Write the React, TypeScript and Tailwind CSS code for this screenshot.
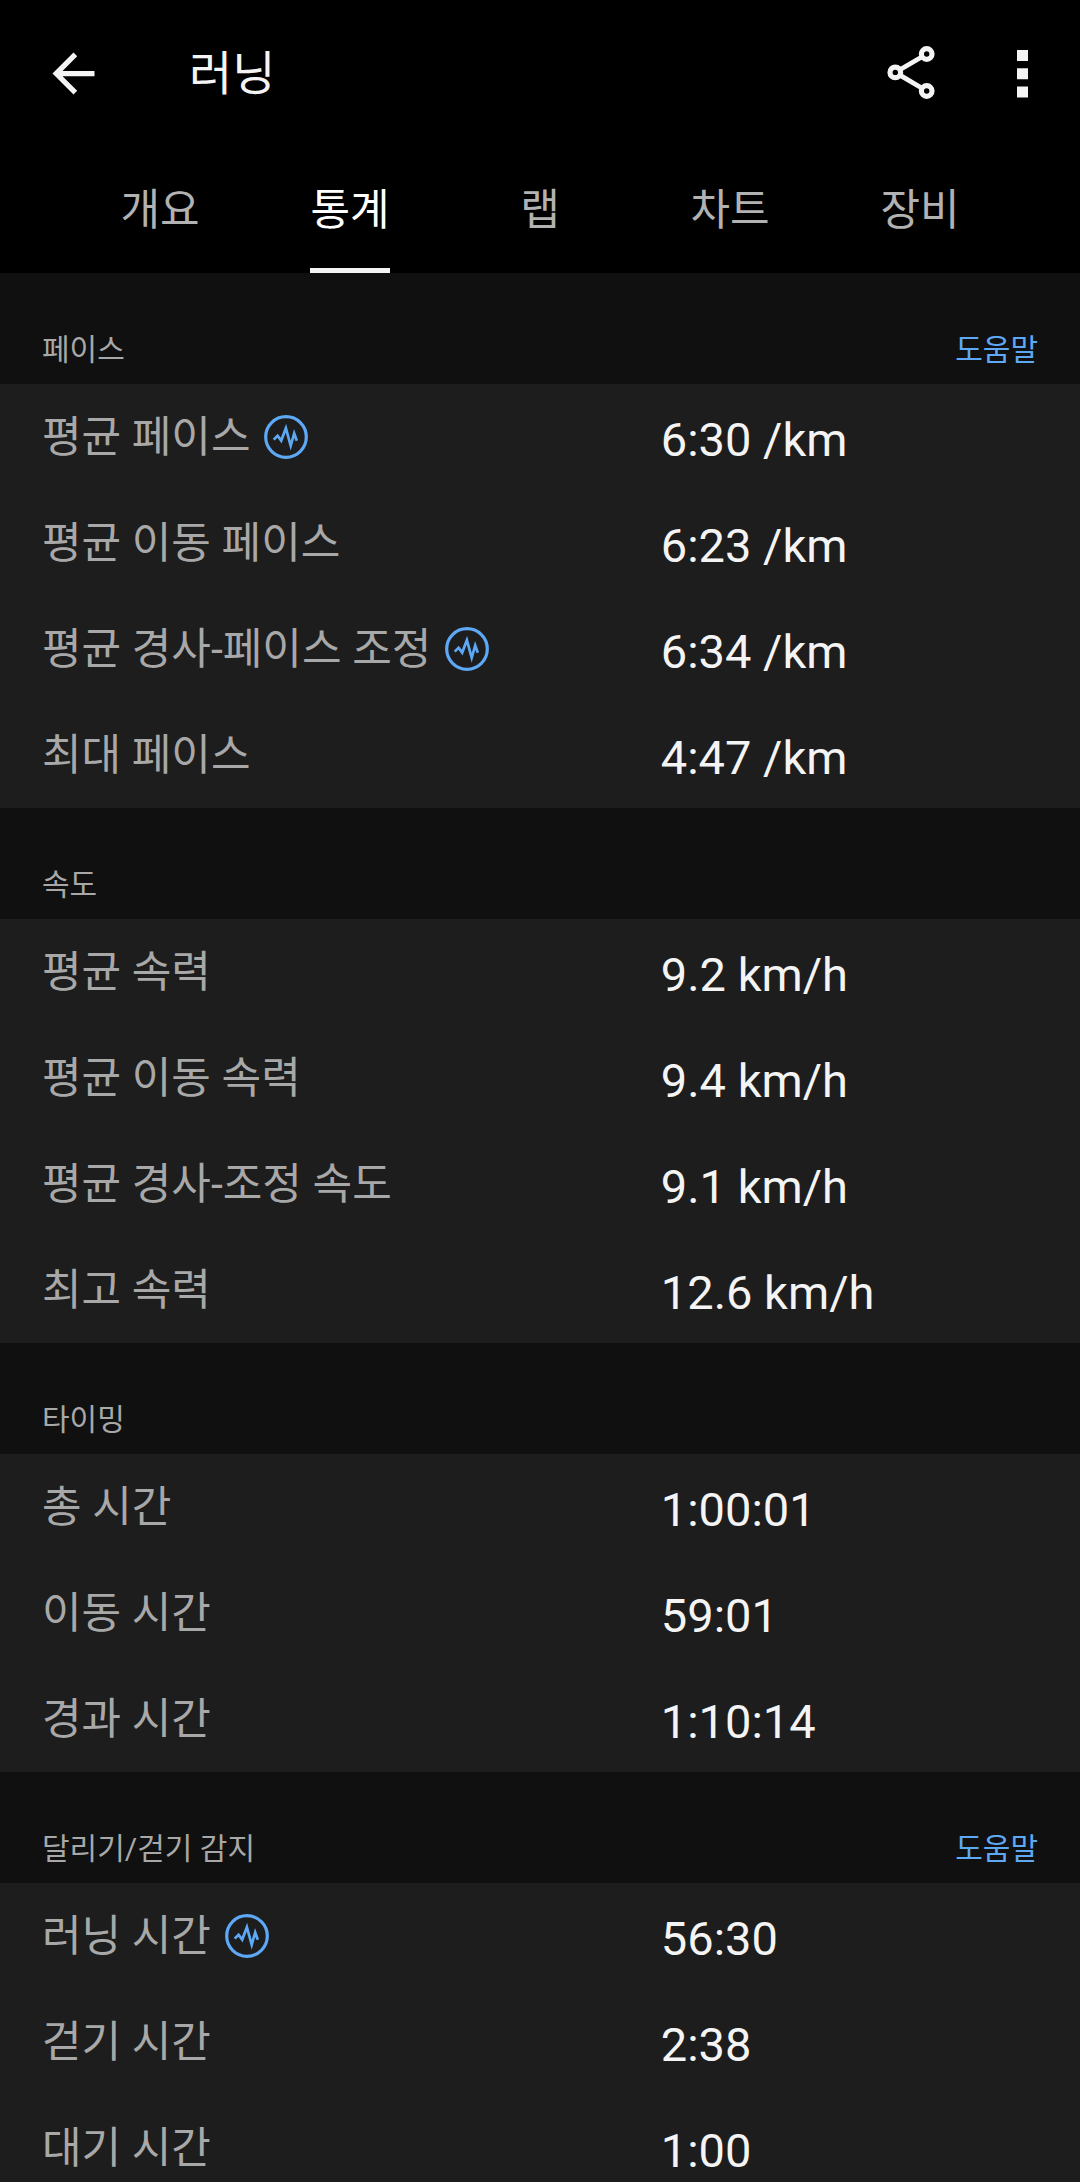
import React from 'react';

type Stat = {
    label: string;
    value: string;
    estimated?: boolean;
};

type StatSection = {
    title: string;
    help?: boolean;
    stats: Stat[];
};

const tabs = ['개요', '통계', '랩', '차트', '장비'];

const sections: StatSection[] = [
    {
        title: '페이스',
        help: true,
        stats: [
            { label: '평균 페이스', value: '6:30 /km', estimated: true },
            { label: '평균 이동 페이스', value: '6:23 /km' },
            { label: '평균 경사-페이스 조정', value: '6:34 /km', estimated: true },
            { label: '최대 페이스', value: '4:47 /km' },
        ],
    },
    {
        title: '속도',
        stats: [
            { label: '평균 속력', value: '9.2 km/h' },
            { label: '평균 이동 속력', value: '9.4 km/h' },
            { label: '평균 경사-조정 속도', value: '9.1 km/h' },
            { label: '최고 속력', value: '12.6 km/h' },
        ],
    },
    {
        title: '타이밍',
        stats: [
            { label: '총 시간', value: '1:00:01' },
            { label: '이동 시간', value: '59:01' },
            { label: '경과 시간', value: '1:10:14' },
        ],
    },
    {
        title: '달리기/걷기 감지',
        help: true,
        stats: [
            { label: '러닝 시간', value: '56:30', estimated: true },
            { label: '걷기 시간', value: '2:38' },
            { label: '대기 시간', value: '1:00' },
        ],
    },
];

const BackIcon: React.FC = () => (
    <svg width="63" height="63" viewBox="0 0 24 24" fill="currentColor" aria-hidden="true">
        <path d="M20 11H7.83l5.59-5.59L12 4l-8 8 8 8 1.41-1.41L7.83 13H20v-2z" />
    </svg>
);

const ShareIcon: React.FC = () => (
    <svg width="55" height="55" viewBox="0 0 55 55" fill="none" stroke="currentColor" strokeWidth="5.2" aria-hidden="true">
        <circle cx="11.3" cy="26.4" r="5.3" />
        <circle cx="42.7" cy="8" r="5.3" />
        <circle cx="42.7" cy="45" r="5.3" />
        <path d="M15.9 23.7l22.2-13M15.9 29.1l22.2 13.1" strokeWidth="4.8" />
    </svg>
);

const MoreIcon: React.FC = () => (
    <svg width="24" height="55" viewBox="0 0 24 55" fill="currentColor" aria-hidden="true">
        <path d="M6 4h11v11H6zM6 22.2h11v11H6zM6 40.5h11v11H6z" />
    </svg>
);

const PulseIcon: React.FC = () => (
    <svg width="44" height="44" viewBox="0 0 44 44" fill="none" stroke="currentColor" className="shrink-0 text-[#5ea9f5]" aria-hidden="true">
        <circle cx="22" cy="22" r="20.3" strokeWidth="3.2" />
        <path d="M9.7 24.6l3.9-3.9 3.6 4.9 4.7-12.4 4.8 17.6 3.5-12.3 2.6 7.2" strokeWidth="2.7" strokeMiterlimit="10" />
    </svg>
);

const Section: React.FC<{ section: StatSection }> = ({ section }) => (
    <section>
        <div className="flex justify-between px-[42px] pt-[54px] pb-3 text-[30px] leading-[45px]">
            <h2 className="text-[#a8a8a8]">{section.title}</h2>
            {section.help && (
                <a href="#help" className="text-[#5ea9f5]">
                    도움말
                </a>
            )}
        </div>
        <table className="w-full table-fixed bg-[#1d1d1d]">
            <tbody>
                {section.stats.map((stat) => (
                    <tr key={stat.label} className="h-[106px]">
                        <th scope="row" className="w-[61%] p-0 pl-[42px] text-left font-normal">
                            <div className="flex items-center gap-3.5 text-[43px] leading-[60px] whitespace-nowrap text-[#a8a8a8]">
                                {stat.label}
                                {stat.estimated && <PulseIcon />}
                            </div>
                        </th>
                        <td className="p-0 pt-1.5 pl-0.5 text-[47px] leading-[60px] text-[#f4f4f4]">{stat.value}</td>
                    </tr>
                ))}
            </tbody>
        </table>
    </section>
);

const App: React.FC = () => {
    return (
        <div className="flex h-screen flex-col bg-[#101010] font-[Roboto,'Noto_Sans_CJK_KR',sans-serif]">
            <header className="shrink-0 bg-black text-[#f4f4f4]">
                <div className="flex h-[147px] items-center pr-[45px] pl-[42px]">
                    <button type="button" aria-label="뒤로">
                        <BackIcon />
                    </button>
                    <h1 className="ml-[84px] flex-1 text-[47px] leading-[60px]">러닝</h1>
                    <div className="flex items-center gap-[72px]">
                        <button type="button" aria-label="공유">
                            <ShareIcon />
                        </button>
                        <button type="button" aria-label="더보기">
                            <MoreIcon />
                        </button>
                    </div>
                </div>
                <nav className="grid h-[126px] grid-cols-5 justify-items-center px-[65px] text-[43px]">
                    {tabs.map((tab) => (
                        <button
                            key={tab}
                            type="button"
                            aria-current={tab === '통계' ? 'page' : undefined}
                            className={
                                tab === '통계'
                                    ? 'border-y-[5px] border-t-transparent border-b-[#f4f4f4] text-white'
                                    : 'border-y-[5px] border-transparent text-[#b2b2b2]'
                            }
                        >
                            {tab}
                        </button>
                    ))}
                </nav>
            </header>

            <main className="min-h-0 flex-1 overflow-y-auto [scrollbar-width:none]">
                {sections.map((section) => (
                    <Section key={section.title} section={section} />
                ))}
            </main>
        </div>
    );
};

export default App;
